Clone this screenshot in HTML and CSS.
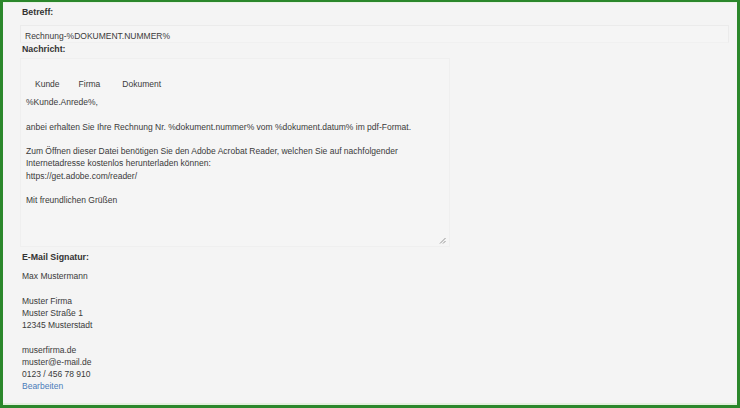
FILE: index.html
```html
<!DOCTYPE html>
<html lang="de">
<head>
<meta charset="utf-8">
<title>E-Mail Vorlage</title>
<link rel="stylesheet" href="styles.css">
</head>
<body>
<div class="frame">
  <div class="page">
    <div class="label">Betreff:</div>
    <div class="input">Rechnung-%DOKUMENT.NUMMER%</div>
    <div class="label">Nachricht:</div>
    <div class="editor">
      <div class="tabs"><span class="tab">Kunde</span><span class="tab">Firma</span><span class="tab">Dokument</span></div>
      <div class="message">
        <p>%Kunde.Anrede%,</p>
        <p>anbei erhalten Sie Ihre Rechnung Nr. %dokument.nummer% vom %dokument.datum% im pdf-Format.</p>
        <p>Zum Öffnen dieser Datei benötigen Sie den Adobe Acrobat Reader, welchen Sie auf nachfolgender<br>Internetadresse kostenlos herunterladen können:<br>https://get.adobe.com/reader/</p>
        <p>Mit freundlichen Grüßen</p>
      </div>
      <svg class="grip" width="7" height="7" viewBox="0 0 7 7"><path d="M6.5 1 L1 6.5 M6.5 4 L4 6.5" stroke="#8a8a8a" stroke-width="0.9" fill="none"/></svg>
    </div>
    <div class="label sig-label">E-Mail Signatur:</div>
    <div class="signature">
      <p>Max Mustermann</p>
      <p>Muster Firma<br>Muster Straße 1<br>12345 Musterstadt</p>
      <p>muserfirma.de<br>muster@e-mail.de<br>0123 / 456 78 910</p>
    </div>
    <a class="edit-link" href="#">Bearbeiten</a>
  </div>
</div>
</body>
</html>
```

FILE: styles.css
```css
html, body {
  margin: 0;
  padding: 0;
}
body {
  width: 740px;
  height: 408px;
  overflow: hidden;
  font-family: "Liberation Sans", Arial, Helvetica, sans-serif;
  font-size: 8.5px;
  color: #3a3a3a;
  background: #f4f4f4;
}
.frame {
  box-sizing: border-box;
  width: 740px;
  height: 408px;
  border: 2px solid #2b872b;
  border-left-width: 3px;
  border-right-width: 3px;
  border-bottom-width: 3px;
  box-shadow: inset 0 -2px 0 #e2f1dc, inset 0 1px 0 #e8f3e4;
  background: #f4f4f4;
}
.page {
  padding: 4px 0 0 19px;
}
.label {
  font-weight: bold;
  font-size: 8.8px;
  line-height: 12px;
  color: #333;
}
.input {
  box-sizing: border-box;
  width: 709px;
  height: 18px;
  margin: 7px 0 0 -2px;
  padding: 4px 0 0 4px;
  line-height: 12px;
  border: 1px solid #ebebeb;
  border-bottom-color: #f0f0f0;
  background: #f5f5f5;
}
.editor {
  position: relative;
  box-sizing: border-box;
  width: 430px;
  height: 189px;
  margin: 3px 0 0 -2px;
  padding: 19px 0 0 5px;
  border: 1px solid #efefef;
  background: #f5f5f5;
}
.tabs {
  display: flex;
  gap: 19px;
  padding-left: 9px;
  line-height: 12px;
}
.tab:nth-child(3) {
  margin-left: 3px;
}
.message {
  margin-top: 6px;
  line-height: 12.25px;
}
.message p,
.signature p {
  margin: 0 0 12.25px 0;
}
.grip {
  position: absolute;
  right: 3px;
  bottom: 2px;
}
.sig-label {
  margin-top: 4px;
}
.signature {
  margin-top: 7px;
  line-height: 12.25px;
}
.signature p:last-child {
  margin-bottom: 0;
}
.edit-link {
  display: block;
  line-height: 12.25px;
  color: #4a7cba;
  text-decoration: none;
}
```
